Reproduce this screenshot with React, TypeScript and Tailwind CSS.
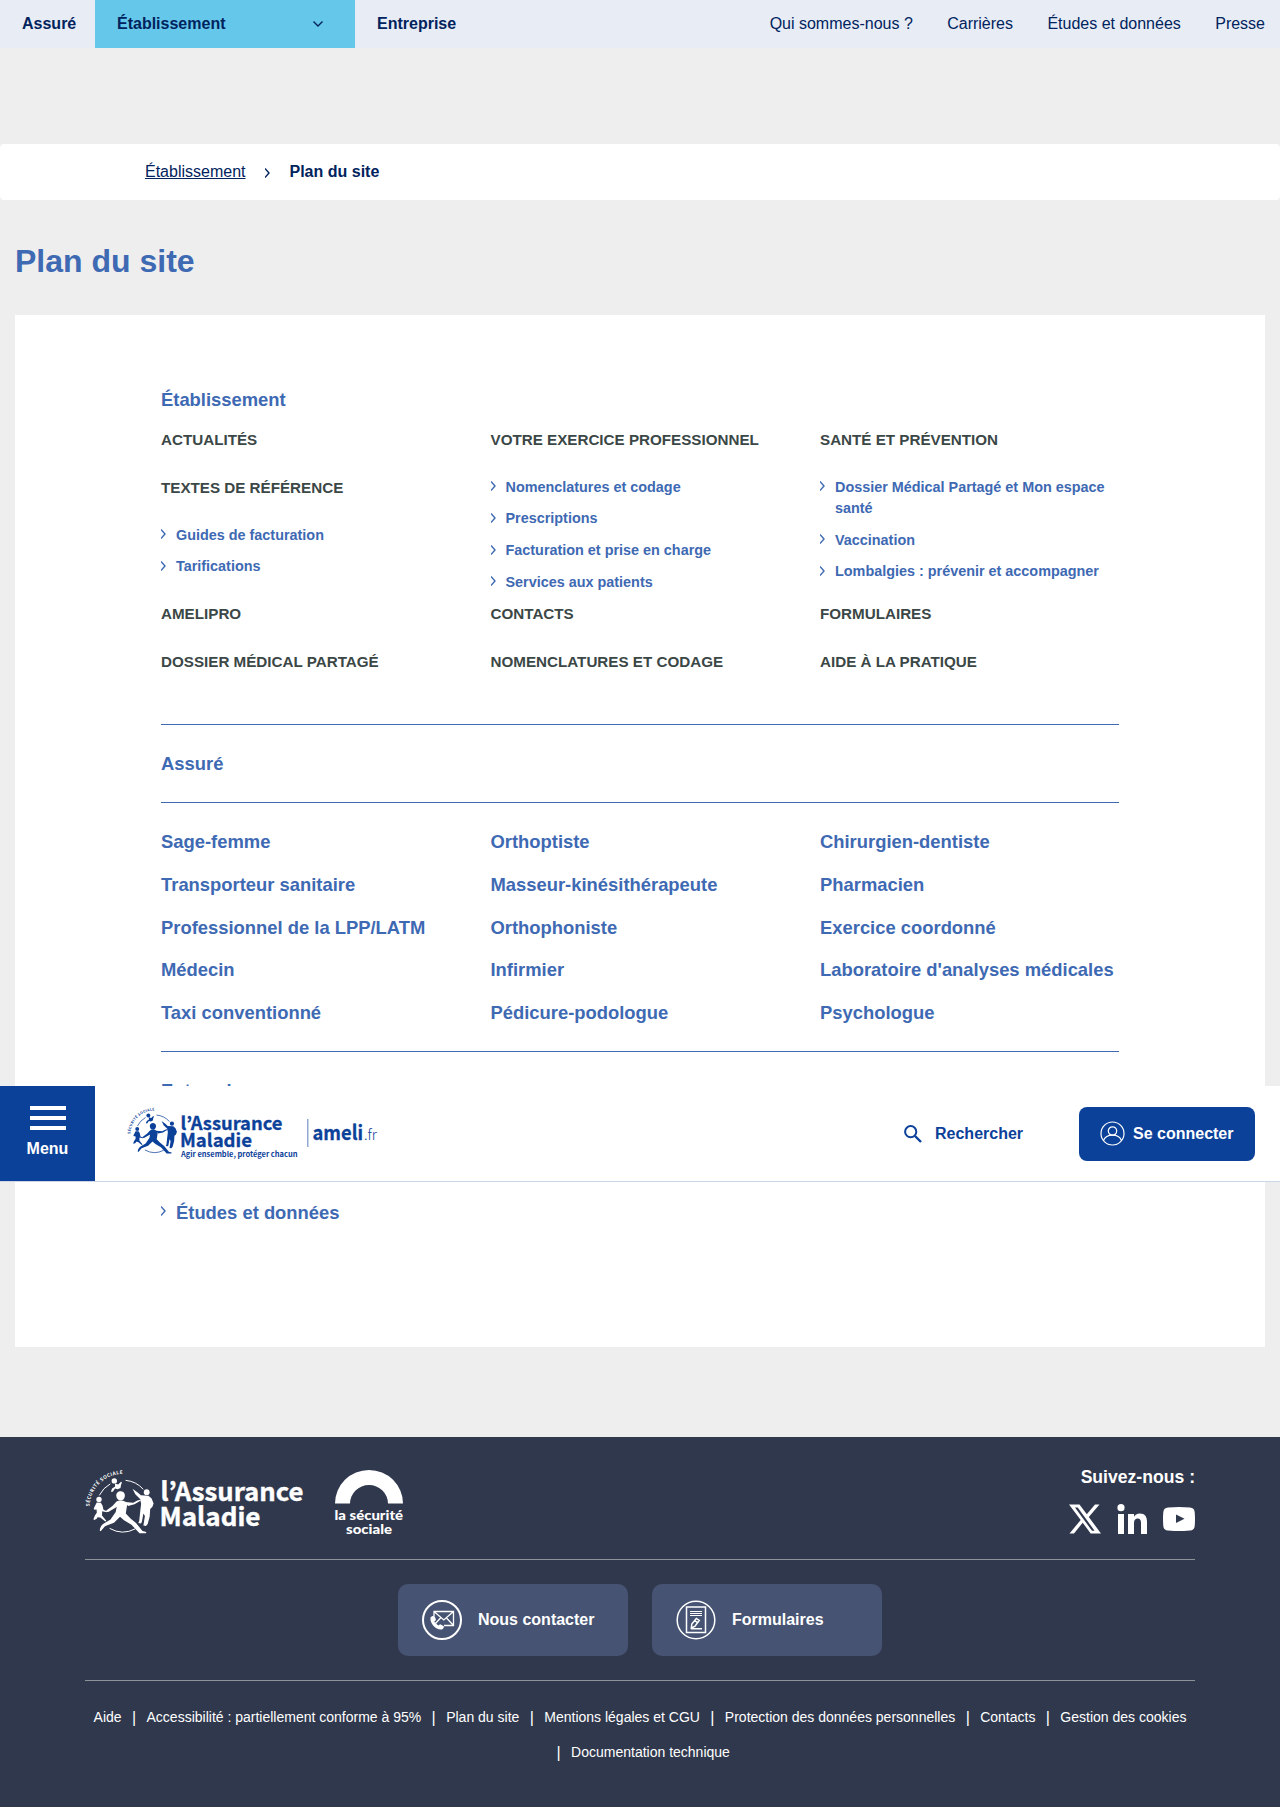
import React from "react";

const BLUE = "#0c419a";

function Chevron({ className = "" }: { className?: string }) {
  return (
    <svg className={className} width="5" height="10" viewBox="0 0 5 10" fill="none" stroke="currentColor" strokeWidth="1.4">
      <path d="M0 0.500 4 5 0 9.500" />
    </svg>
  );
}

function People({ className, dot }: { className: string; dot: string }) {
  return (
    <svg className={className} viewBox="0 0 70 66" overflow="visible" fill="none" stroke="currentColor" strokeLinecap="round" strokeLinejoin="round">
      <path id={dot} d="M4.500 36.500A33.500 33.500 0 0 1 39.500 4" stroke="none" />
      <text fill="currentColor" stroke="none" fontSize="4.800" fontWeight="700" fontFamily="'Noto Sans CJK JP', 'Noto Sans', sans-serif" letterSpacing="0.420">
        <textPath href={"#" + dot}>SÉCURITÉ SOCIALE</textPath>
      </text>
      <path strokeWidth="1" d="M14.500 25A26 26 0 0 1 25 14M41 10.400A26 26 0 0 1 58 19M25 58.600A26 26 0 0 0 50 59" />
      <g fill="currentColor" stroke="none">
        <path d="M31.300 26c-.3-3 2-5 4.700-4.800 2.800.2 4.300 2.500 3.800 5.300-.5 2.500-2 4-4 4-2.400 0-4.200-1.700-4.500-4.500z" />
        <circle cx="14" cy="29.500" r="2.700" />
        <circle cx="61.700" cy="22.200" r="2.900" />
        <circle cx="29.300" cy="10.900" r="2.700" />
        <path d="M31.500 31.500c2.500-1.500 6-1.500 9 .3 1.800 1.200 1.800 3 1.300 5.200l-1 6.500 4.700 5 5.500 4.500 6.500 8 3.800 1-.3 1.200h-6.500l-8-8.500-7.500-4.500-4-3.500-6 6-9 3.500-4.300 5-1-.8c.3-2.500 1.500-5 3.300-6.400l7.500-4.500 5.200-7.500 1-5-8.400 5-2.300-.3.3-1.300 6.400-4.700z" />
        <path d="m40 32 8.300.8 4-2.300 3-.8.700.8-2.200 1.200-4.300 2.600-6.500 1.600z" />
        <path d="m30 13.500 3.200 1 2.800-2.800.9.600-1 3.300-.4 2.400-3 1.300-2.500-.8-2 3-1.600.4-.3-1 1-2.500 3-1.900z" />
        <path d="m11.700 32.500 4.200.2 1.600 2.700 1 4.400 3.400 1.500-.4 1-4.300-1-.2 4.200 4.300 5.300-1 .8-5-4.200-2.800-.2-.8 1.500-2.400 1.300-.9-.7 1.500-3.700 1.900-2.800-.2-3.400-2.200.3-.7-1.200z" />
        <path d="m47.500 18.700 5.200 3.800 3.200 2.800 7.600.4 3.100 2.800 2 5-1.300 3.600-2.100 1.900-.5 7.500-2 7.400-1.700 2-2.600-.3 1.500-9.600-1.500-2.500-1.500 8.300-.9 1.600-2.700-.3.900-2.200 1-9.400.9-7.600-.8-4.600-5-5z" />
      </g>
    </svg>
  );
}

function Head({ children }: { children: React.ReactNode }) {
  return <h3 className="mb-6 h-6 text-[15.200px] leading-6 font-bold whitespace-nowrap text-[#3b4746] uppercase">{children}</h3>;
}

function Links({ items }: { items: string[] }) {
  return (
    <ul className="pt-[0.800px]">
      {items.map((t) => (
        <li key={t} className="mb-[10.400px] flex text-[14.400px] leading-[21.200px] font-bold text-[#3e69b3]">
          <Chevron className="mt-[4.700px] mr-2.5 shrink-0" />
          {t}
        </li>
      ))}
    </ul>
  );
}

const professions = [
  ["Sage-femme", "Orthoptiste", "Chirurgien-dentiste"],
  ["Transporteur sanitaire", "Masseur-kinésithérapeute", "Pharmacien"],
  ["Professionnel de la LPP/LATM", "Orthophoniste", "Exercice coordonné"],
  ["Médecin", "Infirmier", "Laboratoire d'analyses médicales"],
  ["Taxi conventionné", "Pédicure-podologue", "Psychologue"],
];

const legal = [
  "Aide",
  "Accessibilité : partiellement conforme à 95%",
  "Plan du site",
  "Mentions légales et CGU",
  "Protection des données personnelles",
  "Contacts",
  "Gestion des cookies",
  "Documentation technique",
];

function TopBar() {
  return (
    <nav className="flex h-12 items-center bg-[#e7ecf5] text-base text-[#00235d]">
      <b className="w-[95px] pl-[22px]">Assuré</b>
      <div className="flex h-full w-[260px] items-center justify-between bg-[#65c8eb] pr-8 pl-[22px] font-bold">
        Établissement
        <svg width="10" height="6" viewBox="0 0 10 6" fill="none" stroke="currentColor" strokeWidth="1.400">
          <path d="M0.500 0.500 5 5 9.500 0.500" />
        </svg>
      </div>
      <b className="pl-[22px]">Entreprise</b>
      <div className="ml-auto flex gap-[34.400px] pr-[15px]">
        <span>Qui sommes-nous ?</span>
        <span>Carrières</span>
        <span>Études et données</span>
        <span>Presse</span>
      </div>
    </nav>
  );
}

function StickyHeader() {
  return (
    <header className="absolute inset-x-0 top-[1086px] flex h-24 items-center border-b border-[#cdd6e8] bg-white font-bold text-[#0c419a]">
      <div className="flex h-[95px] w-[95px] flex-col items-center bg-[#0c419a] pt-5 text-white">
        <div className="flex w-9 flex-col gap-1.5">
          <span className="h-1 bg-white" />
          <span className="h-1 bg-white" />
          <span className="h-1 bg-white" />
        </div>
        <span className="mt-[7px] leading-6">Menu</span>
      </div>
      <svg className="mb-px ml-8 h-[56px] w-[254px]" viewBox="0 0 254 56" fill={BLUE}>
        <svg width="51" height="48" y="2.500" overflow="visible">
          <People className="h-full w-full" dot="arc-head" />
        </svg>
        <g fontFamily="'Noto Sans CJK JP', 'Noto Sans', sans-serif" fontWeight="700">
          <text x="53.500" y="25" fontSize="18" textLength="102" lengthAdjust="spacingAndGlyphs" stroke={BLUE} strokeWidth="0.300">l’Assurance</text>
          <text x="53" y="42" fontSize="18" textLength="72" lengthAdjust="spacingAndGlyphs" stroke={BLUE} strokeWidth="0.300">Maladie</text>
          <text x="54" y="52" fontSize="7.500" textLength="116.500" lengthAdjust="spacing">Agir ensemble, protéger chacun</text>
          <text x="185.500" y="35" fontSize="20" textLength="50.500" lengthAdjust="spacingAndGlyphs" stroke={BLUE} strokeWidth="0.300">ameli</text>
          <text x="237" y="35" fontSize="14.500" fontWeight="300" textLength="13" lengthAdjust="spacingAndGlyphs">.fr</text>
        </g>
        <rect x="180" y="14" width="1.500" height="28" opacity=".45" />
      </svg>
      <svg className="ml-[523px] shrink-0" width="18" height="18" viewBox="0 0 18 18" fill="none" stroke={BLUE} strokeWidth="2">
        <circle cx="6.700" cy="6.700" r="5.600" />
        <path d="m11 11 6 6" strokeWidth="2.400" />
      </svg>
      <span className="ml-[13px]">Rechercher</span>
      <button className="mr-[25px] ml-auto flex h-[54px] w-[176px] items-center rounded-lg bg-[#0c419a] pl-[21px] text-white">
        <svg className="mr-2" width="25" height="25" viewBox="0 0 25 25" fill="none" stroke="currentColor" strokeWidth="1.200">
          <circle cx="12.500" cy="12.500" r="11.500" />
          <circle cx="12.500" cy="10" r="4.200" />
          <path d="M3.500 19.500c1.200-3 4.500-5.300 9-5.300s7.800 2.300 9 5.300" />
        </svg>
        Se connecter
      </button>
    </header>
  );
}

function Footer() {
  return (
    <footer className="h-[370px] bg-[#30384d] px-[85px] pt-[33px] text-white">
      <div className="flex h-[90px] border-b border-[#8f9299]">
        <svg width="320" height="70" viewBox="0 0 320 70" overflow="visible" fill="white">
          <svg width="70" height="66" overflow="visible">
            <People className="h-full w-full" dot="arc-foot" />
          </svg>
          <g fontFamily="'Noto Sans CJK JP', 'Noto Sans', sans-serif" fontWeight="700" stroke="white" strokeWidth="0.400">
            <text x="75.500" y="30.700" fontSize="25.500" textLength="143" lengthAdjust="spacingAndGlyphs">l’Assurance</text>
            <text x="74.500" y="55.700" fontSize="25.500" textLength="101" lengthAdjust="spacingAndGlyphs">Maladie</text>
          </g>
          <path d="M250 33.500a34 33.500 0 0 1 68 0H303a19 18.500 0 0 0-38 0z" />
          <g fontFamily="Lato, sans-serif" fontWeight="900" fontSize="14">
            <text x="249.500" y="50" textLength="68.500" lengthAdjust="spacingAndGlyphs">la sécurité</text>
            <text x="261" y="63.700" textLength="46" lengthAdjust="spacingAndGlyphs">sociale</text>
          </g>
        </svg>
        <div className="ml-auto flex flex-col items-end">
          <b className="-mt-[5px] text-[17.600px] leading-6">Suivez-nous :</b>
          <div className="mt-[15px] flex items-center gap-4">
            <svg width="32" height="30" viewBox="0 0 32 30" fill="white">
              <path fillRule="evenodd" d="M0 .5h10.500l7.300 9.800L26 .5h4.500L19.800 13 32 29.500H21.700l-8-10.800L5 29.500H.5L11.700 16zM6 3.500 23 26.800h2.600L8.700 3.500z" />
            </svg>
            <svg width="30" height="30" viewBox="0 0 30 30" fill="white">
              <circle cx="4" cy="3.700" r="3.600" />
              <path d="M1 10h6v20H1zM11 10h6v2.700c1-1.900 3-3.200 5.800-3.200 5.200 0 7.200 3.200 7.200 8.500v12h-6V19c0-2.700-1-4.400-3.200-4.400-2.500 0-3.800 1.700-3.800 4.400v11h-6z" />
            </svg>
            <svg width="32" height="24" viewBox="0 0 32 24">
              <path fill="white" d="M5 .5q11-1 22 0 4.300.3 4.700 4.700.6 7 0 13.700-.4 4.300-4.700 4.700-11 1-22 0Q.7 23.200.3 18.900q-.6-7 0-13.700Q.7.800 5 .5z" />
              <path fill="#30384d" d="m13 7.500 8.500 4.200L13 16z" />
            </svg>
          </div>
        </div>
      </div>
      <div className="flex h-[121px] justify-center gap-6 border-b border-[#8f9299] pt-6 font-bold">
        <div className="flex h-[72px] w-[230px] items-center rounded-[10px] bg-[#465372] pl-6">
          <svg className="mr-4" width="40" height="40" viewBox="0 0 40 40" fill="none" stroke="white" strokeWidth="1.300">
            <circle cx="20" cy="20" r="19" strokeWidth="2" />
            <path d="M12 16.500v-5h19.500v14H22M12 11.500l9.800 8.500 9.700-8.500M12.500 24.500l6.500-7M31.500 25.500l-7-7.500" />
            <path fill="white" stroke="none" d="M8.500 17.500c1.500-2 3.500-2 4.500-.5l1 3-1.800 1.800 4 3.700 2-1.200 3.300 1.700c1 1.500-.5 3.500-2.500 3.500-5 .3-11.500-6-10.500-12z" />
          </svg>
          Nous contacter
        </div>
        <div className="flex h-[72px] w-[230px] items-center rounded-[10px] bg-[#465372] pl-6">
          <svg className="mr-4" width="40" height="40" viewBox="0 0 40 40" fill="none" stroke="white">
            <circle cx="20" cy="20" r="18.800" strokeWidth="1.500" />
            <path strokeWidth="1.500" d="M10.500 7h19v25.500h-19zM15 28.800h11" />
            <path strokeWidth="1" d="M14 11.500h12M14 13.500h12M14 15.500h12" />
            <path strokeWidth="1.500" d="m15.300 28 .5-4 4.500-5.500 3 2-4.500 6zM18.500 20.500l3 2.200" />
          </svg>
          Formulaires
        </div>
      </div>
      <div className="flex flex-wrap justify-center pt-[19px] text-sm leading-[35px] whitespace-nowrap">
        {legal.map((t, i) => (
          <span key={t} className="flex h-[35px] items-center last:mr-1">
            {i > 0 && <span className="mr-[10.400px] ml-[10.400px] text-base">|</span>}
            {t}
          </span>
        ))}
      </div>
    </footer>
  );
}

export default function App() {
  return (
    <div className="relative h-[1807px] overflow-hidden bg-[#eeeeee] [font-family:'Liberation_Sans',Arial,sans-serif]">
      <TopBar />
      <div className="mt-24 flex h-14 items-center rounded bg-white pl-[145px] text-base text-[#00235d]">
        <a className="underline">Établissement</a>
        <Chevron className="mt-0.5 mr-[19.500px] ml-[19.500px]" />
        <b>Plan du site</b>
      </div>
      <h1 className="mt-[39px] ml-[15px] text-[32px] leading-[44px] font-bold text-[#3e69b3]">Plan du site</h1>
      <main className="mx-[15px] mt-8 h-[1032px] bg-white px-[146px] pt-[73px] text-[#3e69b3]">
        <h2 className="text-[18.400px] leading-6 font-bold">Établissement</h2>
        <div className="mt-4 grid h-[174px] grid-cols-[329.500px_329.500px_1fr]">
          <section>
            <Head>Actualités</Head>
            <Head>Textes de référence</Head>
            <Links items={["Guides de facturation", "Tarifications"]} />
          </section>
          <section>
            <Head>Votre exercice professionnel</Head>
            <Links items={["Nomenclatures et codage", "Prescriptions", "Facturation et prise en charge", "Services aux patients"]} />
          </section>
          <section>
            <Head>Santé et prévention</Head>
            <Links items={["Dossier Médical Partagé et Mon espace santé", "Vaccination", "Lombalgies : prévenir et accompagner"]} />
          </section>
        </div>
        <div className="grid grid-cols-[329.500px_329.500px_1fr]">
          <Head>Amelipro</Head>
          <Head>Contacts</Head>
          <Head>Formulaires</Head>
          <Head>Dossier médical partagé</Head>
          <Head>Nomenclatures et codage</Head>
          <Head>Aide à la pratique</Head>
        </div>
        <hr className="mt-[26px] border-[#3e69b3]" />
        <h2 className="flex h-[77px] items-center text-[18.400px] font-bold">Assuré</h2>
        <hr className="border-[#3e69b3]" />
        <div className="mt-[18px] grid h-[214px] grid-cols-[329.500px_329.500px_1fr] text-[18.400px] leading-[42.700px] font-bold whitespace-nowrap">
          {professions.flat().map((p) => (
            <span key={p}>{p}</span>
          ))}
        </div>
        <hr className="mt-4 border-[#3e69b3]" />
        <h2 className="flex h-[78px] items-center text-[18.400px] font-bold">Entreprise</h2>
        <div className="mt-[71px] flex text-[18.400px] leading-6 font-bold">
          <Chevron className="mt-[5px] mr-2.5" />
          Études et données
        </div>
      </main>
      <div className="mt-[90px]">
        <Footer />
      </div>
      <StickyHeader />
    </div>
  );
}
